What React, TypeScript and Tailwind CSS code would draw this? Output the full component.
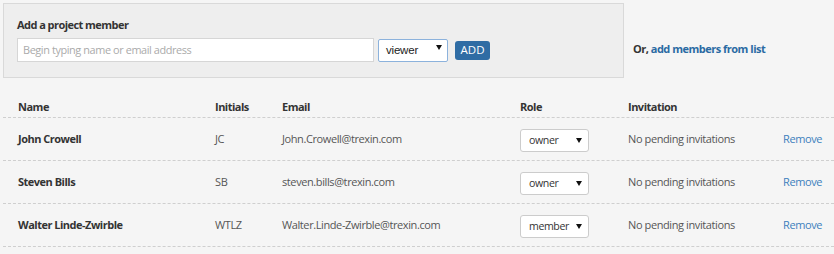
import React from "react";

type Member = { name: string; initials: string; email: string; role: string };

const members: Member[] = [
  { name: "John Crowell", initials: "JC", email: "John.Crowell@trexin.com", role: "owner" },
  { name: "Steven Bills", initials: "SB", email: "steven.bills@trexin.com", role: "owner" },
  { name: "Walter Linde-Zwirble", initials: "WTLZ", email: "Walter.Linde-Zwirble@trexin.com", role: "member" },
];

const Caret = () => (
  <svg width="6" height="5" viewBox="0 0 6 5" className="shrink-0">
    <path d="M0 0h6L3 5z" fill="#111" />
  </svg>
);

const cols = "grid grid-cols-[212px_67px_238px_108px_155px_1fr] items-center";

export default function App() {
  return (
    <div className="min-h-[254px] w-[834px] bg-[#f5f5f5] pl-[3px] pt-[3px] font-['Open_Sans',sans-serif] text-[11px] tracking-[-0.4px] text-[#333]">
      <div className="flex items-center">
        <div className="h-[75px] w-[621px] border border-[#d9d9d9] bg-[#eeeeee] pl-[13px] pt-[12px]">
          <div className="text-[11px] font-bold leading-[17px] tracking-[-0.55px] text-[#333]">Add a project member</div>
          <div className="mt-[5px] flex items-center">
            <div className="flex h-[24px] w-[357px] items-center border border-[#d6d6d6] bg-white pl-[5px] text-[10.9px] text-[#aaa]">
              Begin typing name or email address
            </div>
            <div className="ml-[4px] flex h-[23px] w-[70px] items-center justify-between rounded-[2px] border border-[#8cb2dc] bg-white pl-[7px] pr-[5px] font-['Liberation_Sans',sans-serif] text-[11.5px] tracking-[-0.2px] text-[#222]">
              <span className="mt-[2px]">viewer</span>
              <span className="-mt-[5px]"><Caret /></span>
            </div>
            <div className="ml-[7px] flex h-[19px] w-[35px] items-center justify-center rounded-[3px] bg-[#2f6ca4] text-[11.5px] tracking-[0px] text-white">
              ADD
            </div>
          </div>
        </div>
        <div className="ml-[9px] mt-[18px] text-[11px] font-bold tracking-[-0.5px]">
          <span className="text-[#333]">Or, </span>
          <span className="text-[#2a6aa3]">add members from list</span>
        </div>
      </div>

      <div className={`${cols} mt-[20px] h-[20px] border-b border-dashed border-[#cfcfcf] font-bold tracking-[-0.5px]`}>
        <div className="pl-[15px]">Name</div>
        <div>Initials</div>
        <div>Email</div>
        <div>Role</div>
        <div>Invitation</div>
        <div />
      </div>

      {members.map((m) => (
        <div key={m.email} className={`${cols} h-[43px] border-b border-dashed border-[#cfcfcf] text-[#555]`}>
          <div className="pl-[15px] font-bold tracking-[-0.5px] text-[#333]">{m.name}</div>
          <div>{m.initials}</div>
          <div>{m.email}</div>
          <div>
            <div className="mt-[2px] flex h-[23px] w-[69px] items-center justify-between rounded-[3px] border border-[#cccccc] bg-white pl-[8px] pr-[6px] text-[10.6px] text-[#333]">
              <span className="mt-[1px]">{m.role}</span>
              <Caret />
            </div>
          </div>
          <div>No pending invitations</div>
          <div className="text-[#3d7fbd]">Remove</div>
        </div>
      ))}
    </div>
  );
}
